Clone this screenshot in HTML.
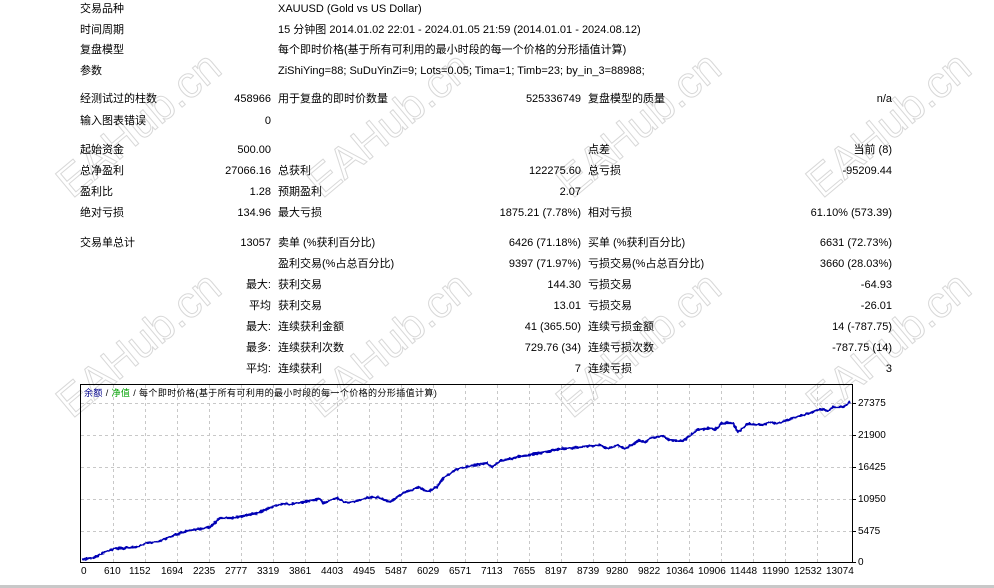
<!DOCTYPE html>
<html style="width:994px;height:588px;overflow:hidden"><head><meta charset="utf-8"><style>
*{margin:0;padding:0}
body{width:994px;height:588px;background:#fff;position:relative;overflow:hidden;font-family:"Liberation Sans","Noto Sans CJK SC",sans-serif;font-size:11px;color:#000}
.t{position:absolute;white-space:nowrap;line-height:14px}
.r{text-align:right}
.wm{position:absolute;font-size:44px;font-family:"Liberation Sans",sans-serif;color:transparent;-webkit-text-stroke:1px #d8d8d8;transform:rotate(-40deg);white-space:nowrap;z-index:0}
.ax{position:absolute;font-size:10px;line-height:12px;white-space:nowrap}
</style></head><body>
<div class="wm" style="left:40px;top:100px">EAHub.cn</div>
<div class="wm" style="left:290px;top:100px">EAHub.cn</div>
<div class="wm" style="left:540px;top:100px">EAHub.cn</div>
<div class="wm" style="left:790px;top:100px">EAHub.cn</div>
<div class="wm" style="left:40px;top:320px">EAHub.cn</div>
<div class="wm" style="left:290px;top:320px">EAHub.cn</div>
<div class="wm" style="left:540px;top:320px">EAHub.cn</div>
<div class="wm" style="left:790px;top:320px">EAHub.cn</div>

<div class="t" style="left:80px;top:2px">交易品种</div>
<div class="t" style="left:278px;top:2px">XAUUSD (Gold vs US Dollar)</div>
<div class="t" style="left:80px;top:23px">时间周期</div>
<div class="t" style="left:278px;top:23px">15 分钟图 2014.01.02 22:01 - 2024.01.05 21:59 (2014.01.01 - 2024.08.12)</div>
<div class="t" style="left:80px;top:43px">复盘模型</div>
<div class="t" style="left:278px;top:43px">每个即时价格(基于所有可利用的最小时段的每一个价格的分形插值计算)</div>
<div class="t" style="left:80px;top:64px">参数</div>
<div class="t" style="left:278px;top:64px">ZiShiYing=88; SuDuYinZi=9; Lots=0.05; Tima=1; Timb=23; by_in_3=88988;</div>

<div class="t" style="left:80px;top:92px">经测试过的柱数</div>
<div class="t r" style="right:723px;top:92px">458966</div>
<div class="t" style="left:278px;top:92px">用于复盘的即时价数量</div>
<div class="t r" style="right:413px;top:92px">525336749</div>
<div class="t" style="left:588px;top:92px">复盘模型的质量</div>
<div class="t r" style="right:102px;top:92px">n/a</div>
<div class="t" style="left:80px;top:114px">输入图表错误</div>
<div class="t r" style="right:723px;top:114px">0</div>

<div class="t" style="left:80px;top:143px">起始资金</div>
<div class="t r" style="right:723px;top:143px">500.00</div>
<div class="t" style="left:588px;top:143px">点差</div>
<div class="t r" style="right:102px;top:143px">当前 (8)</div>
<div class="t" style="left:80px;top:164px">总净盈利</div>
<div class="t r" style="right:723px;top:164px">27066.16</div>
<div class="t" style="left:278px;top:164px">总获利</div>
<div class="t r" style="right:413px;top:164px">122275.60</div>
<div class="t" style="left:588px;top:164px">总亏损</div>
<div class="t r" style="right:102px;top:164px">-95209.44</div>
<div class="t" style="left:80px;top:185px">盈利比</div>
<div class="t r" style="right:723px;top:185px">1.28</div>
<div class="t" style="left:278px;top:185px">预期盈利</div>
<div class="t r" style="right:413px;top:185px">2.07</div>
<div class="t" style="left:80px;top:206px">绝对亏损</div>
<div class="t r" style="right:723px;top:206px">134.96</div>
<div class="t" style="left:278px;top:206px">最大亏损</div>
<div class="t r" style="right:413px;top:206px">1875.21 (7.78%)</div>
<div class="t" style="left:588px;top:206px">相对亏损</div>
<div class="t r" style="right:102px;top:206px">61.10% (573.39)</div>

<div class="t" style="left:80px;top:236px">交易单总计</div>
<div class="t r" style="right:723px;top:236px">13057</div>
<div class="t" style="left:278px;top:236px">卖单 (%获利百分比)</div>
<div class="t r" style="right:413px;top:236px">6426 (71.18%)</div>
<div class="t" style="left:588px;top:236px">买单 (%获利百分比)</div>
<div class="t r" style="right:102px;top:236px">6631 (72.73%)</div>
<div class="t" style="left:278px;top:257px">盈利交易(%占总百分比)</div>
<div class="t r" style="right:413px;top:257px">9397 (71.97%)</div>
<div class="t" style="left:588px;top:257px">亏损交易(%占总百分比)</div>
<div class="t r" style="right:102px;top:257px">3660 (28.03%)</div>
<div class="t r" style="right:723px;top:278px">最大:</div>
<div class="t" style="left:278px;top:278px">获利交易</div>
<div class="t r" style="right:413px;top:278px">144.30</div>
<div class="t" style="left:588px;top:278px">亏损交易</div>
<div class="t r" style="right:102px;top:278px">-64.93</div>
<div class="t r" style="right:723px;top:299px">平均</div>
<div class="t" style="left:278px;top:299px">获利交易</div>
<div class="t r" style="right:413px;top:299px">13.01</div>
<div class="t" style="left:588px;top:299px">亏损交易</div>
<div class="t r" style="right:102px;top:299px">-26.01</div>
<div class="t r" style="right:723px;top:320px">最大:</div>
<div class="t" style="left:278px;top:320px">连续获利金额</div>
<div class="t r" style="right:413px;top:320px">41 (365.50)</div>
<div class="t" style="left:588px;top:320px">连续亏损金额</div>
<div class="t r" style="right:102px;top:320px">14 (-787.75)</div>
<div class="t r" style="right:723px;top:341px">最多:</div>
<div class="t" style="left:278px;top:341px">连续获利次数</div>
<div class="t r" style="right:413px;top:341px">729.76 (34)</div>
<div class="t" style="left:588px;top:341px">连续亏损次数</div>
<div class="t r" style="right:102px;top:341px">-787.75 (14)</div>
<div class="t r" style="right:723px;top:362px">平均:</div>
<div class="t" style="left:278px;top:362px">连续获利</div>
<div class="t r" style="right:413px;top:362px">7</div>
<div class="t" style="left:588px;top:362px">连续亏损</div>
<div class="t r" style="right:102px;top:362px">3</div>

<svg style="position:absolute;left:0;top:0" width="994" height="588">
<defs><filter id="j" x="-5%" y="-5%" width="110%" height="110%"><feTurbulence type="fractalNoise" baseFrequency="0.35" numOctaves="1" seed="3"/><feDisplacementMap in="SourceGraphic" scale="3.5" xChannelSelector="R" yChannelSelector="G"/></filter></defs>
<g stroke="#c8c8c8" stroke-dasharray="3,3" stroke-width="1">
<line x1="113.5" y1="385" x2="113.5" y2="562"/><line x1="145.5" y1="385" x2="145.5" y2="562"/><line x1="177.5" y1="385" x2="177.5" y2="562"/><line x1="209.5" y1="385" x2="209.5" y2="562"/><line x1="241.5" y1="385" x2="241.5" y2="562"/><line x1="273.5" y1="385" x2="273.5" y2="562"/><line x1="305.5" y1="385" x2="305.5" y2="562"/><line x1="337.5" y1="385" x2="337.5" y2="562"/><line x1="369.5" y1="385" x2="369.5" y2="562"/><line x1="401.5" y1="385" x2="401.5" y2="562"/><line x1="433.5" y1="385" x2="433.5" y2="562"/><line x1="465.5" y1="385" x2="465.5" y2="562"/><line x1="497.5" y1="385" x2="497.5" y2="562"/><line x1="529.5" y1="385" x2="529.5" y2="562"/><line x1="561.5" y1="385" x2="561.5" y2="562"/><line x1="593.5" y1="385" x2="593.5" y2="562"/><line x1="625.5" y1="385" x2="625.5" y2="562"/><line x1="657.5" y1="385" x2="657.5" y2="562"/><line x1="689.5" y1="385" x2="689.5" y2="562"/><line x1="721.5" y1="385" x2="721.5" y2="562"/><line x1="753.5" y1="385" x2="753.5" y2="562"/><line x1="785.5" y1="385" x2="785.5" y2="562"/><line x1="817.5" y1="385" x2="817.5" y2="562"/>
<line x1="81" y1="403.5" x2="852" y2="403.5"/><line x1="81" y1="435.5" x2="852" y2="435.5"/><line x1="81" y1="467.5" x2="852" y2="467.5"/><line x1="81" y1="499.5" x2="852" y2="499.5"/><line x1="81" y1="531.5" x2="852" y2="531.5"/>
</g>
<rect x="80.5" y="384.5" width="772" height="178" fill="none" stroke="#000"/>
<g stroke="#000"><line x1="853" y1="403.5" x2="856" y2="403.5"/><line x1="853" y1="435.5" x2="856" y2="435.5"/><line x1="853" y1="467.5" x2="856" y2="467.5"/><line x1="853" y1="499.5" x2="856" y2="499.5"/><line x1="853" y1="531.5" x2="856" y2="531.5"/><line x1="853" y1="562.5" x2="856" y2="562.5"/></g>
<polyline filter="url(#j)" fill="none" stroke="#0000b4" stroke-width="2.2" stroke-linejoin="round" points="82,559 93,558 103,553 113,549 125,548 137,547 147,543 160,541 177,534 190,530 200,529 210,527 220,518 232,518 243,516 257,513 270,508 280,504 292,504 303,502 320,499 323,503 337,498 347,503 360,500 370,497 380,498 390,502 403,493 420,487 427,492 437,487 443,478 457,469 470,466 487,463 492,467 500,461 518,457 540,453 560,449 580,447 600,445 608,449 617,445 625,449 640,440 645,443 650,438 663,436 670,440 683,441 697,430 710,428 715,430 722,423 733,423 738,432 748,424 763,425 770,422 777,424 787,420 800,416 810,413 820,409 828,411 833,407 843,407 850,402"/>
<rect x="0" y="585" width="994" height="3" fill="#c8c8c8"/>
</svg>
<div class="ax" style="left:84px;top:387px;font-size:9px;letter-spacing:0.4px"><span style="color:#00008b">余额</span> / <span style="color:#00a000">净值</span> / 每个即时价格(基于所有可利用的最小时段的每一个价格的分形插值计算)</div>
<div class="ax" style="left:858px;top:398px">27375</div>
<div class="ax" style="left:858px;top:430px">21900</div>
<div class="ax" style="left:858px;top:462px">16425</div>
<div class="ax" style="left:858px;top:494px">10950</div>
<div class="ax" style="left:858px;top:526px">5475</div>
<div class="ax" style="left:858px;top:557px">0</div>
<div class="ax" style="left:81px;top:566px">0</div>
<div class="ax" style="left:104px;top:566px">610</div><div class="ax" style="left:129px;top:566px">1152</div><div class="ax" style="left:161px;top:566px">1694</div><div class="ax" style="left:193px;top:566px">2235</div><div class="ax" style="left:225px;top:566px">2777</div><div class="ax" style="left:257px;top:566px">3319</div><div class="ax" style="left:289px;top:566px">3861</div><div class="ax" style="left:321px;top:566px">4403</div><div class="ax" style="left:353px;top:566px">4945</div><div class="ax" style="left:385px;top:566px">5487</div><div class="ax" style="left:417px;top:566px">6029</div><div class="ax" style="left:449px;top:566px">6571</div><div class="ax" style="left:481px;top:566px">7113</div><div class="ax" style="left:513px;top:566px">7655</div><div class="ax" style="left:545px;top:566px">8197</div><div class="ax" style="left:577px;top:566px">8739</div><div class="ax" style="left:606px;top:566px">9280</div><div class="ax" style="left:638px;top:566px">9822</div><div class="ax" style="left:666px;top:566px">10364</div><div class="ax" style="left:698px;top:566px">10906</div><div class="ax" style="left:730px;top:566px">11448</div><div class="ax" style="left:762px;top:566px">11990</div><div class="ax" style="left:794px;top:566px">12532</div><div class="ax" style="left:826px;top:566px">13074</div>
</body></html>
